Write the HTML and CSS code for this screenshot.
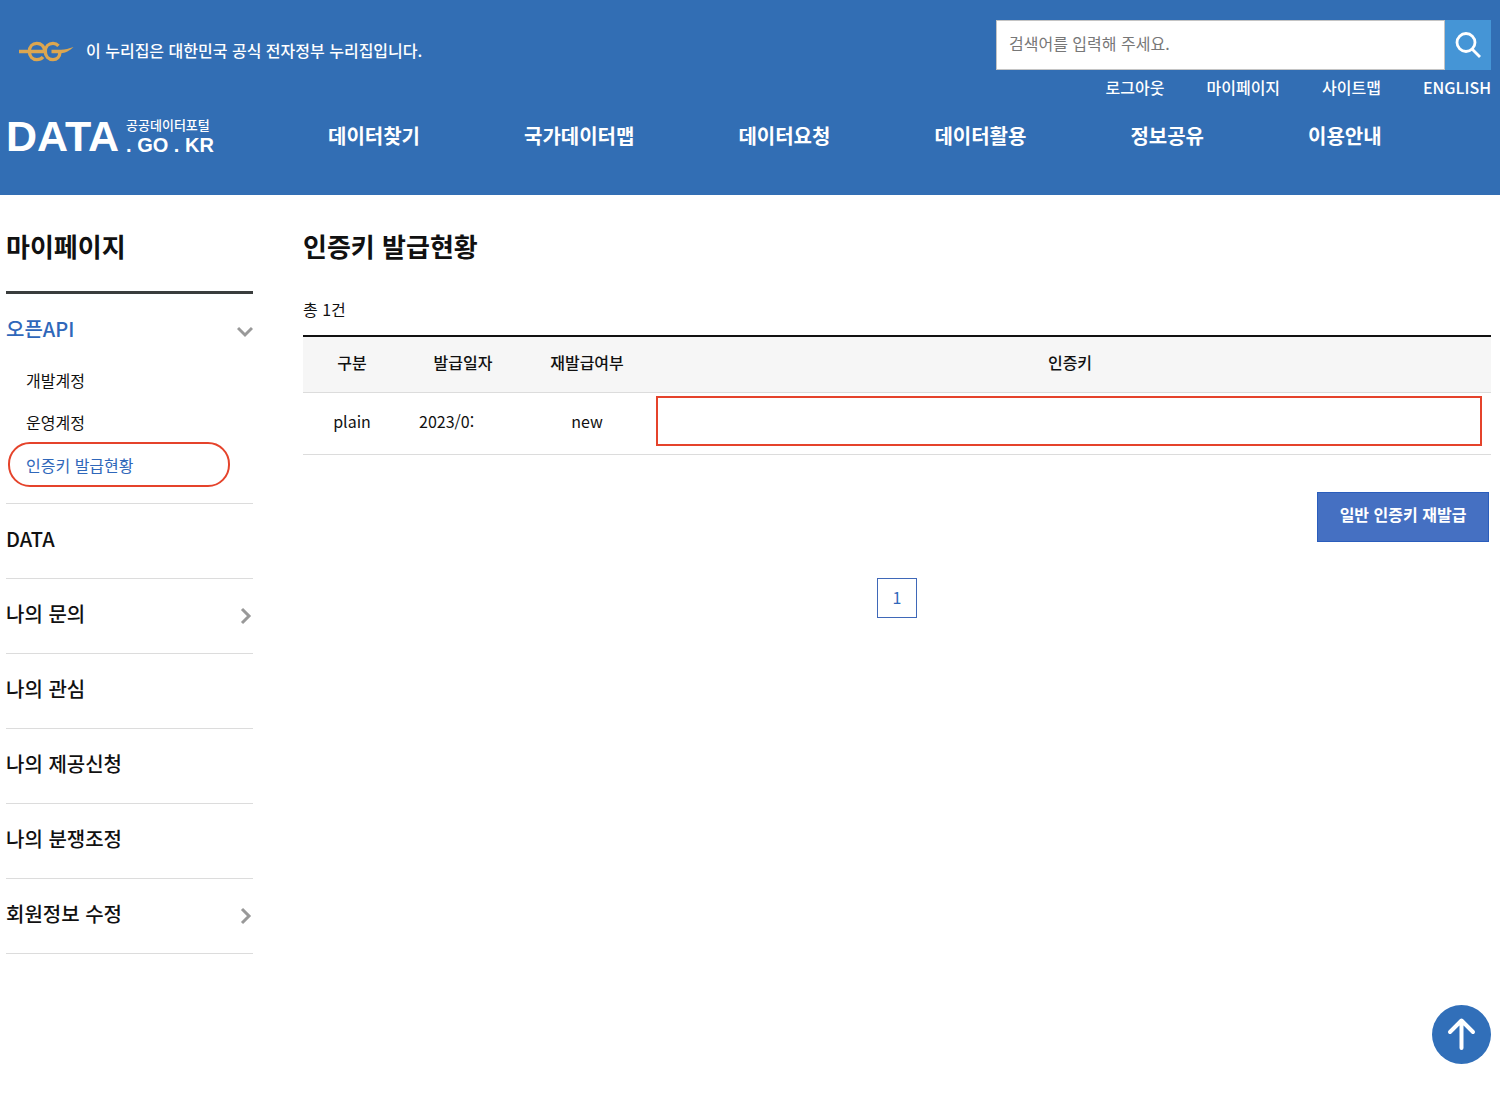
FILE: index.html
```html
<!DOCTYPE html>
<html lang="ko">
<head>
<meta charset="utf-8">
<meta name="viewport" content="width=device-width, initial-scale=1">
<title>인증키 발급현황</title>
<link rel="stylesheet" href="styles.css">
</head>
<body>
<header class="header">
  <div class="header-top">
    <div class="notice">
      <svg class="eg-mark" width="55" height="21" viewBox="0 0 55 21" aria-hidden="true">
        <g fill="none" stroke="#dca650" stroke-width="3.400">
          <path d="M0 10.500H25.500C25.500 5 22 2.400 17.800 2.400C13.500 2.400 10.400 5.500 10.400 10.500C10.400 15.500 13.500 18.600 17.800 18.600C20.500 18.600 22.500 17.800 24 16"/>
          <path d="M39.500 4.800C38 3.200 36.300 2.400 34 2.400C29.500 2.400 26.300 5.500 26.300 10.500C26.300 15.500 29.500 18.600 34 18.600C38 18.600 40.800 15.800 41 11"/>
        </g>
        <path d="M32.500 8.800H42C46 8.800 50 7.500 54.500 6C51 9.500 46 12.200 42 12.200H32.500Z" fill="#dca650"/>
      </svg>
      <p class="notice-text">이 누리집은 대한민국 공식 전자정부 누리집입니다.</p>
    </div>
    <div class="tools">
      <form class="search">
        <input class="search-input" type="text" placeholder="검색어를 입력해 주세요." aria-label="검색어">
        <button class="search-button" type="button" aria-label="검색">
          <svg width="28" height="28" viewBox="0 0 28 28" fill="none" stroke="#fff" stroke-width="2.800" aria-hidden="true">
            <circle cx="12" cy="11.500" r="9"/><path d="M18 18L26 26"/>
          </svg>
        </button>
      </form>
      <nav class="utility" aria-label="사용자 메뉴">
        <a href="#">로그아웃</a><a href="#">마이페이지</a><a href="#">사이트맵</a><a href="#">ENGLISH</a>
      </nav>
    </div>
  </div>
  <div class="header-main">
    <a class="logo" href="#">
      <span class="logo-data">DATA</span>
      <span class="logo-side"><span class="logo-name">공공데이터포털</span><span class="logo-domain">. GO . KR</span></span>
    </a>
    <nav class="gnb" aria-label="주 메뉴">
      <a href="#">데이터찾기</a><a href="#">국가데이터맵</a><a href="#">데이터요청</a><a href="#">데이터활용</a><a href="#">정보공유</a><a href="#">이용안내</a>
    </nav>
  </div>
</header>
<div class="layout">
  <aside class="sidebar">
    <h2 class="title side-title">마이페이지</h2>
    <ul class="menu">
      <li class="menu-item menu-item-open">
        <a class="menu-link active" href="#">오픈API
          <svg width="16" height="18" viewBox="0 0 16 18" class="chevron" aria-hidden="true"><path d="M1 6L8 13L15 6"/></svg></a>
        <ul class="submenu">
          <li><a class="submenu-link" href="#">개발계정</a></li>
          <li><a class="submenu-link" href="#">운영계정</a></li>
          <li><a class="submenu-link current" href="#">인증키 발급현황</a></li>
        </ul>
      </li>
      <li class="menu-item"><a class="menu-link" href="#">DATA</a></li>
      <li class="menu-item"><a class="menu-link" href="#">나의 문의
        <svg width="16" height="18" viewBox="0 0 16 18" class="chevron" aria-hidden="true"><path d="M5 2L12 9L5 16"/></svg></a></li>
      <li class="menu-item"><a class="menu-link" href="#">나의 관심</a></li>
      <li class="menu-item"><a class="menu-link" href="#">나의 제공신청</a></li>
      <li class="menu-item"><a class="menu-link" href="#">나의 분쟁조정</a></li>
      <li class="menu-item"><a class="menu-link" href="#">회원정보 수정
        <svg width="16" height="18" viewBox="0 0 16 18" class="chevron" aria-hidden="true"><path d="M5 2L12 9L5 16"/></svg></a></li>
    </ul>
  </aside>
  <main class="content">
    <h1 class="title">인증키 발급현황</h1>
    <p class="total">총 1건</p>
    <table class="keys">
      <colgroup><col class="col-type"><col class="col-date"><col class="col-date"><col></colgroup>
      <thead>
        <tr><th scope="col">구분</th><th scope="col">발급일자</th><th scope="col">재발급여부</th><th scope="col">인증키</th></tr>
      </thead>
      <tbody>
        <tr><td>plain</td><td><div class="date">2023/0:</div></td><td>new</td><td class="key-cell"><div class="key-box"></div></td></tr>
      </tbody>
    </table>
    <div class="actions"><button class="reissue" type="button">일반 인증키 재발급</button></div>
    <nav class="pages" aria-label="페이지"><a class="page" href="#" aria-current="page">1</a></nav>
  </main>
</div>
<a class="to-top" href="#" aria-label="맨 위로">
  <svg width="59" height="59" viewBox="0 0 59 59" fill="none" stroke="#fff" stroke-width="4" stroke-linecap="round" stroke-linejoin="round" aria-hidden="true">
    <path d="M29.500 43V16M18 27L29.500 15.500L41 27"/>
  </svg>
</a>
</body>
</html>
```
FILE: styles.css
```css
* { box-sizing: border-box; }

body {
  margin: 0;
  background: #fff;
  color: #111;
  font-family: "Noto Sans CJK KR", sans-serif;
  font-size: 16px;
  line-height: 24px;
}

a { color: inherit; text-decoration: none; }
p, h1, h2, ul { margin: 0; padding: 0; }
ul { list-style: none; }

.header {
  padding: 20px 9px 36px 6px;
  background: #326eb4;
  color: #fff;
}

.header-top { display: flex; justify-content: space-between; }

.notice {
  display: flex;
  align-items: center;
  gap: 12px;
  height: 62px;
  padding-left: 13px;
}
.notice-text { padding-bottom: 2px; }
.notice-text, .utility { font-weight: 500; }

.tools { width: 495px; }
.search { display: flex; height: 50px; }
.search-input {
  flex: 1;
  min-width: 0;
  padding: 0 12px 4px;
  border: 1px solid #c4c4c4;
  border-radius: 0;
  background: #fff;
  color: #333;
  font: inherit;
}
.search-input::placeholder { color: #777; opacity: 1; }
.search-button {
  display: flex;
  align-items: center;
  justify-content: center;
  width: 46px;
  padding: 0;
  border: 0;
  background: #4595d6;
}
.utility {
  display: flex;
  justify-content: flex-end;
  gap: 42px;
  padding-top: 5px;
}

.header-main { display: flex; align-items: center; height: 60px; padding-top: 13px; }
.logo {
  display: flex;
  align-items: center;
  gap: 7px;
  width: 322px;
  font-family: "Liberation Sans", sans-serif;
  font-weight: 700;
}
.logo-data { font-size: 43px; line-height: 44px; }
.logo-side { display: flex; flex-direction: column; }
.logo-name { font: 500 13px/18px "Noto Sans CJK KR", sans-serif; }
.logo-domain { font-size: 20px; line-height: 22px; white-space: nowrap; }
.gnb {
  display: flex;
  gap: 104px;
  font-size: 20px;
  font-weight: 700;
  white-space: nowrap;
}

.layout {
  display: grid;
  grid-template-columns: 247px minmax(0, 1fr);
  gap: 50px;
  padding: 31px 9px 64px 6px;
}

.title { font-size: 26px; font-weight: 700; line-height: 40px; }
.side-title { padding-bottom: 25px; border-bottom: 3px solid #3a3d3d; }

.menu-item {
  border-bottom: 1px solid #dcdcdc;
}
.menu-link {
  display: flex;
  align-items: center;
  justify-content: space-between;
  height: 74px;
  padding-bottom: 4px;
  font-size: 20px;
  font-weight: 500;
}
.menu-item-open { padding-bottom: 16px; }
.active { color: #2f67ba; }
.submenu-link {
  display: flex;
  align-items: center;
  height: 42px;
  padding-left: 20px;
}
.current {
  width: 222px;
  height: 45px;
  margin: -1px 0 0 2px;
  padding-left: 16px;
  border: 2px solid #e5432b;
  border-radius: 22px;
  color: #2f67ba;
}
.submenu { margin-top: -9px; }
.chevron { margin-top: 3px; fill: none; stroke: #999; stroke-width: 3; }

.total { padding: 31px 0 14px; }
.keys {
  width: 100%;
  border-collapse: collapse;
  border-top: 2px solid #111;
  table-layout: fixed;
  text-align: center;
}
.col-type { width: 98px; }
.col-date { width: 124px; }
.keys th {
  height: 56px;
  padding: 0 0 4px;
  background: #f6f6f6;
  border-bottom: 1px solid #dcdcdc;
  font-weight: 500;
}
.keys td {
  height: 62px;
  padding: 0 0 4px;
  border-bottom: 1px solid #dcdcdc;
}
.date { width: 88px; margin: 0 auto; text-align: left; }
.keys .key-cell { padding: 0 9px 4px 7px; }
.key-box { height: 50px; border: 2px solid #e5432b; }

.actions { display: flex; justify-content: flex-end; padding: 37px 2px 0; }
.reissue {
  width: 172px;
  height: 50px;
  padding: 0 0 5px;
  border: 1px solid #2a5dbc;
  background: #4570c2;
  color: #fff;
  font: inherit;
  font-weight: 700;
}
.pages { display: flex; justify-content: center; padding-top: 36px; }
.page {
  width: 40px;
  height: 40px;
  border: 1px solid #3f68b8;
  color: #2f67ba;
  line-height: 36px;
  text-align: center;
}

.to-top {
  position: fixed;
  right: 9px;
  bottom: 31px;
  width: 59px;
  height: 59px;
  border-radius: 50%;
  background: #316fb9;
}
```
